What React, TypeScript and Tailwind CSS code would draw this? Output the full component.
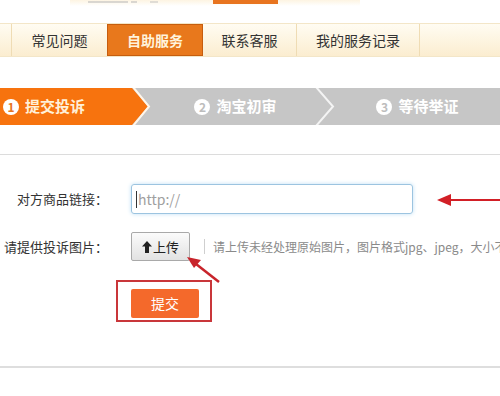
import React from "react";

const font = { fontFamily: '"Noto Sans CJK SC", "Noto Sans", sans-serif' };

function StepCircle({ n, active }: { n: number; active?: boolean }) {
  return (
    <span
      className={`mr-[6px] flex h-[16px] w-[16px] items-center justify-center rounded-full bg-white text-[12px] font-bold leading-none ${
        active ? "text-[#e8741f]" : "text-[#bdbdbd]"
      }`}
    >
      {n}
    </span>
  );
}

export default function App() {
  return (
    <div className="relative h-[396px] w-[500px] overflow-hidden bg-white text-[#333]" style={font}>
      {/* top strip, cut off */}
      <div className="flex h-[23px] items-start">
        <div className="ml-[70px] flex h-[6px] w-[290px] items-start bg-gradient-to-b from-[#fdf4e2] to-white">
          <div className="ml-[18px] mt-px flex gap-[3px]">
            <div className="h-[2px] w-[40px] bg-[#b5b5b5] opacity-50" />
            <div className="h-[2px] w-[6px] bg-[#b5b5b5] opacity-50" />
            <div className="ml-[10px] h-[2px] w-[8px] bg-[#b5b5b5] opacity-40" />
          </div>
          <div className="ml-[55px] h-[4px] w-[65px] bg-[#e8741f]" />
        </div>
      </div>

      {/* nav */}
      <div className="flex h-[34px] border-y border-[#f3e6c8] bg-gradient-to-b from-[#fffcf2] to-[#fbedd0] text-[14px]">
        <div className="w-[12px] border-r border-[#efdcb4]" />
        <div className="flex w-[95px] items-center justify-center">常见问题</div>
        <div className="flex w-[96px] items-center justify-center border border-[#c65d0e] bg-[#e8781c] font-bold text-[#fff4dc]">
          自助服务
        </div>
        <div className="flex w-[94px] items-center justify-center border-r border-[#efdcb4]">联系客服</div>
        <div className="flex w-[123px] items-center justify-center border-r border-[#efdcb4]">我的服务记录</div>
        <div className="flex-1" />
      </div>

      {/* steps */}
      <div className="mt-[31px] flex h-[37px] bg-[#c6c6c6] text-[15px] font-bold text-white">
        <div className="flex w-[132px] items-center bg-[#f7730e] pl-[3px] text-[#fff0d8]">
          <StepCircle n={1} active />
          提交投诉
        </div>
        <svg width="20" height="37" viewBox="0 0 20 37" className="shrink-0">
          <polygon points="0,0 16,18.5 0,37" fill="#f7730e" />
          <polyline points="1,-1 17,18.5 1,38" fill="none" stroke="#fff6ea" strokeWidth="2" />
        </svg>
        <div className="flex w-[163px] items-center justify-center pl-[4px]">
          <StepCircle n={2} />
          淘宝初审
        </div>
        <svg width="20" height="37" viewBox="0 0 20 37" className="shrink-0">
          <polyline points="1,-1 18,18.5 1,38" fill="none" stroke="#f4f4f4" strokeWidth="2" />
        </svg>
        <div className="flex flex-1 items-center justify-center">
          <StepCircle n={3} />
          等待举证
        </div>
      </div>

      <div className="mt-[29px] h-px bg-[#dcdcdc]" />

      {/* form */}
      <div className="mt-[29px] flex items-center text-[13px]">
        <div className="w-[108px] text-right">对方商品链接：</div>
        <div className="ml-[23px] flex h-[30px] w-[282px] items-center rounded-[3px] border border-[#9cc4e0] pl-[4px] text-[14px] text-[#a0a0a0] shadow-[0_0_4px_#bfe0f5]">
          <span className="mr-px h-[17px] w-px bg-[#333]" />
          http://
        </div>
      </div>

      <div className="mt-[18px] flex items-center text-[13px]">
        <div className="w-[108px] text-right">请提供投诉图片：</div>
        <div className="ml-[23px] flex h-[29px] w-[59px] items-center justify-center rounded-[2px] border border-[#a9a9a9] bg-gradient-to-b from-[#fbfbfb] to-[#e2e2e2] text-[#222]">
          <svg width="10" height="12" viewBox="0 0 10 12" className="mr-px">
            <polygon points="5,0 10,5.5 7,5.5 7,12 3,12 3,5.5 0,5.5" fill="#222" />
          </svg>
          上传
        </div>
        <div className="ml-[14px] h-[15px] w-px bg-[#cfcfcf]" />
        <div className="ml-[8px] min-w-0 flex-1 overflow-hidden whitespace-nowrap text-[12px] text-[#8a8a8a]">
          请上传未经处理原始图片，图片格式jpg、jpeg，大小不
        </div>
      </div>

      <div className="mt-[19px] ml-[116px] flex h-[42px] w-[96px] items-start border-2 border-[#c9363a] pl-[13px] pt-[7px]">
        <div className="flex h-[29px] w-[68px] items-center justify-center rounded-[2px] bg-[#f4692b] text-[14px] text-white">
          提交
        </div>
      </div>

      <div className="mt-[44px] h-[2px] bg-[#dedede]" />

      {/* annotation arrows */}
      <svg className="absolute left-0 top-0" width="500" height="396" viewBox="0 0 500 396">
        <line x1="448" y1="200" x2="500" y2="200" stroke="#d21f26" strokeWidth="2" />
        <polygon points="437,200 451,194 451,206" fill="#d21f26" />
        <line x1="219" y1="282" x2="196" y2="264" stroke="#c8242b" strokeWidth="2.5" />
        <polygon points="187,257 201,260 194,268" fill="#c8242b" />
      </svg>
    </div>
  );
}
